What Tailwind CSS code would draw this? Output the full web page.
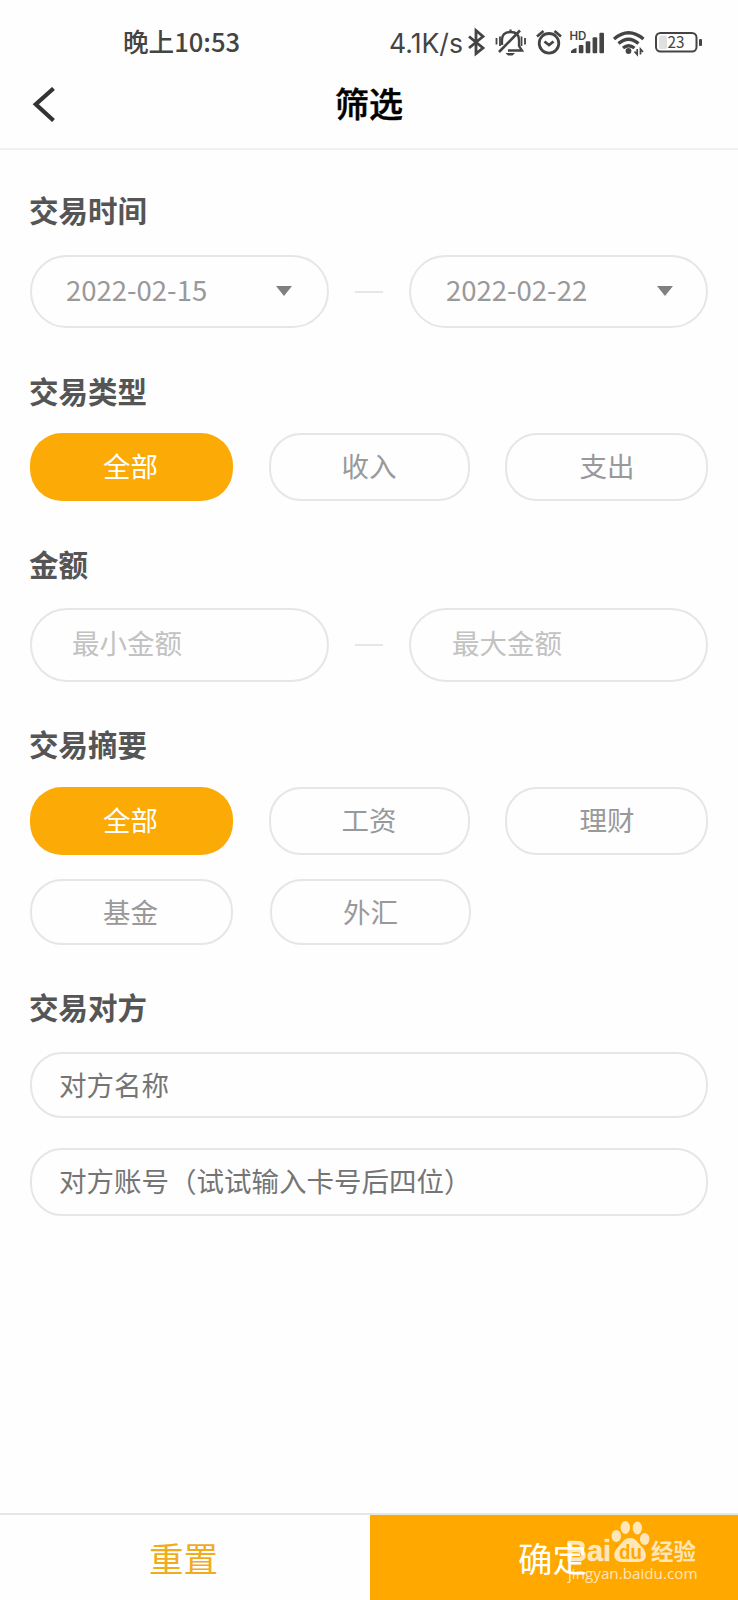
<!DOCTYPE html>
<html lang="zh-CN">
<head>
<meta charset="utf-8">
<meta name="viewport" content="width=device-width">
<title>筛选</title>
<script src="https://cdn.jsdelivr.net/npm/@tailwindcss/browser@4"></script>
</head>
<body class="bg-[#fefefe]">
<div class="relative flex h-[1600px] w-[738px] flex-col overflow-hidden bg-[#fefefe] font-['Noto_Sans_CJK_SC',sans-serif] text-[27.5px] text-[#999]">

  <!-- Status bar -->
  <div class="flex h-[75px] items-center justify-between pt-[9px] pr-[35px] pl-[123px] text-[#444]">
    <span class="pb-px text-[25.6px] font-medium whitespace-nowrap">晚上10:53</span>
    <div class="flex items-center">
      <span class="mr-[3px] w-[76px] pt-[2px] font-[Inter,sans-serif] text-[26.6px] leading-none font-normal whitespace-nowrap">4.1K/s</span>
      <svg class="h-[30px] w-[235px]" viewBox="468 27 235 30" fill="none" stroke="#444" stroke-width="2.8">
        <path d="M469 36.500L483 48L476 53.500V30.500L483 36.500L469 48"/>
        <g stroke-width="2.3">
          <path d="M502 45V40C502 35 505 32 510.500 32C516 32 519 35 519 40V46L522 50.500H508M510.500 29.500V32"/>
          <path d="M499 52L520 30.500" stroke-width="2.600"/>
          <path d="M505.500 53H515L512.500 55.500H508Z" fill="#444" stroke="none"/>
          <path d="M496.500 38V44.500M500 36.500V46M521.500 36.500V46M525 38V44.500" stroke-width="1.800"/>
        </g>
        <circle cx="549" cy="43.300" r="9.800"/>
        <path d="M537 36.500L543.500 31M561 36.500L554.500 31" stroke-width="2.700"/>
        <path d="M544.500 41.500L549 45L553.500 41.500"/>
        <g fill="#444" stroke="none">
          <path d="M571 53V51Q573 48.500 576.500 48V53Z"/>
          <rect x="578.800" y="45" width="4.600" height="8.200" rx="1"/>
          <rect x="585.700" y="41.300" width="4.600" height="11.900" rx="1"/>
          <rect x="592.600" y="37.300" width="4.600" height="15.900" rx="1"/>
          <rect x="599.400" y="32.800" width="4.600" height="20.400" rx="1"/>
          <circle cx="628.500" cy="51" r="2.900"/>
        </g>
        <text x="569.500" y="39.500" fill="#444" stroke="none" font-family="Inter, sans-serif" font-size="11.500" font-weight="600">HD</text>
        <path d="M614 39Q628.500 26.500 643.500 39M618.500 43.500Q628.500 35 638.500 43.500M623 48Q628.500 43.500 634.500 48" stroke-width="3.300"/>
        <path d="M637.200 49V54.500L634.500 51.500M640.500 54.500V49L643 52" stroke-width="1.700"/>
        <rect x="656" y="33" width="40.500" height="18.500" rx="4.500" stroke-width="2"/>
        <rect x="659" y="35.500" width="8" height="13.500" rx="2" fill="#e0e0e0" stroke="none"/>
        <rect x="699" y="39" width="3" height="7" rx="1" fill="#444" stroke="none"/>
        <text x="667.500" y="48.300" fill="#444" stroke="none" font-family="Noto Sans CJK SC, sans-serif" font-size="16" font-weight="400" textLength="17" lengthAdjust="spacingAndGlyphs">23</text>
      </svg>
    </div>
  </div>

  <!-- Title bar -->
  <header class="grid h-[75px] grid-cols-[100px_1fr_100px] items-center border-b-2 border-[#f0f0f0] pb-[15px]">
    <svg class="ml-[32px] h-[35px] w-[24px]" viewBox="0 0 24 35" fill="none" stroke="#333" stroke-width="4.200"><path d="M21.500 1.500L3.800 17.300L21.500 33.500"/></svg>
    <h1 class="-mt-[2px] text-center text-[34px] leading-[50px] font-medium text-black [-webkit-text-stroke:0.5px_#000]">筛选</h1>
  </header>

  <main class="flex grow flex-col px-[30px] pt-[40px]">
    <h2 class="-ml-px h-[40px] text-[29.5px] leading-[39px] font-bold text-[#555]">交易时间</h2>
    <div class="mt-[25px] flex items-center justify-between">
      <div class="flex h-[73px] w-[299px] items-center justify-between rounded-full border-2 border-[#e6e6e6] pr-[35px] pb-[4px] pl-[34px]">
        <span>2022-02-15</span><svg class="mt-[3px] h-[10px] w-[16px]" viewBox="0 0 16 10" fill="#808080"><path d="M0 0H16L8 10Z"/></svg>
      </div>
      <div class="h-[2px] w-[28px] bg-[#e6e6e6]"></div>
      <div class="flex h-[73px] w-[299px] items-center justify-between rounded-full border-2 border-[#e6e6e6] pr-[33px] pb-[4px] pl-[35px]">
        <span>2022-02-22</span><svg class="mt-[3px] h-[10px] w-[16px]" viewBox="0 0 16 10" fill="#808080"><path d="M0 0H16L8 10Z"/></svg>
      </div>
    </div>

    <h2 class="mt-[42px] -ml-px h-[40px] text-[29.5px] leading-[40px] font-bold text-[#555]">交易类型</h2>
    <div class="mt-[23px] flex justify-between text-center leading-[60px]">
      <div class="h-[68px] w-[203px] rounded-[32px] bg-[#fcaa05] pt-[2px] pr-[2px] text-white">全部</div>
      <div class="h-[68px] w-[201px] rounded-[32px] border-2 border-[#e6e6e6]">收入</div>
      <div class="h-[68px] w-[203px] rounded-[32px] border-2 border-[#e6e6e6] pl-px">支出</div>
    </div>

    <h2 class="mt-[43px] -ml-px h-[40px] text-[29.5px] leading-[38px] font-bold text-[#555]">金额</h2>
    <div class="mt-[24px] flex items-center justify-between text-[#c2c2c2]">
      <div class="h-[74px] w-[299px] rounded-full border-2 border-[#e6e6e6] pl-[40px] leading-[64px]">最小金额</div>
      <div class="h-[2px] w-[28px] bg-[#e6e6e6]"></div>
      <div class="h-[74px] w-[299px] rounded-full border-2 border-[#e6e6e6] pl-[41px] leading-[64px]">最大金额</div>
    </div>

    <h2 class="mt-[42px] -ml-px h-[40px] text-[29.5px] leading-[39px] font-bold text-[#555]">交易摘要</h2>
    <div class="mt-[23px] flex justify-between text-center leading-[60px]">
      <div class="h-[68px] w-[203px] rounded-[32px] bg-[#fcaa05] pt-[2px] pr-[2px] text-white">全部</div>
      <div class="h-[68px] w-[201px] rounded-[32px] border-2 border-[#e6e6e6]">工资</div>
      <div class="h-[68px] w-[203px] rounded-[32px] border-2 border-[#e6e6e6] pl-px">理财</div>
    </div>
    <div class="mt-[24px] flex gap-[37px] text-center leading-[60px]">
      <div class="h-[66px] w-[203px] rounded-[32px] border-2 border-[#e6e6e6] pr-[2px]">基金</div>
      <div class="h-[66px] w-[201px] rounded-[32px] border-2 border-[#e6e6e6]">外汇</div>
    </div>

    <h2 class="mt-[42px] -ml-px h-[40px] text-[29.5px] leading-[39px] font-bold text-[#555]">交易对方</h2>
    <div class="mt-[25px] h-[66px] rounded-[32px] border-2 border-[#e6e6e6] pl-[27px] leading-[60px] text-[#757575]">对方名称</div>
    <div class="mt-[30px] h-[68px] rounded-[32px] border-2 border-[#e6e6e6] pl-[27px] leading-[60px] text-[#757575]">对方账号（试试输入卡号后四位）</div>
  </main>

  <!-- Bottom actions -->
  <footer class="flex h-[87px] border-t-2 border-[#e6e6e6] text-center text-[34.5px] leading-[84px]">
    <div class="w-[370px] pr-[3px] text-[#f1ac1d]">重置</div>
    <div class="grow bg-[#ffa800] pr-[3px] text-white">确定</div>
  </footer>

  <!-- Watermark over the confirm button -->
  <div class="absolute top-[1520px] left-[566px] h-[66px] w-[134px]">
    <svg class="h-full w-full" viewBox="566 1520 134 66" fill="#fff" fill-opacity=".72">
      <text x="566" y="1561" font-family="Liberation Sans, sans-serif" font-size="29.500" font-weight="700" stroke="#fff" stroke-opacity=".5" stroke-width=".6" textLength="45" lengthAdjust="spacingAndGlyphs">Bai</text>
      <ellipse cx="616.300" cy="1536" rx="4.800" ry="6"/>
      <ellipse cx="625.300" cy="1527.500" rx="4.700" ry="6.500"/>
      <ellipse cx="637.300" cy="1528" rx="4.700" ry="6.500"/>
      <ellipse cx="644.700" cy="1539" rx="4.800" ry="6"/>
      <path d="M630 1538C636 1538 638 1543 642 1547C648 1553 647 1562 639 1562H622C613 1562 612 1553 618 1547C622 1543 624 1538 630 1538Z"/>
      <text x="619" y="1559" fill="#ffa800" fill-opacity="1" font-family="Liberation Sans, sans-serif" font-size="20" font-weight="700" textLength="23" lengthAdjust="spacingAndGlyphs">du</text>
      <text x="651" y="1560" font-family="Noto Sans CJK SC, sans-serif" font-size="22.500" font-weight="700">经验</text>
      <text x="568" y="1579" font-family="Open Sans, sans-serif" font-size="15" textLength="129.500" lengthAdjust="spacingAndGlyphs">jingyan.baidu.com</text>
    </svg>
  </div>
</div>
</body>
</html>
